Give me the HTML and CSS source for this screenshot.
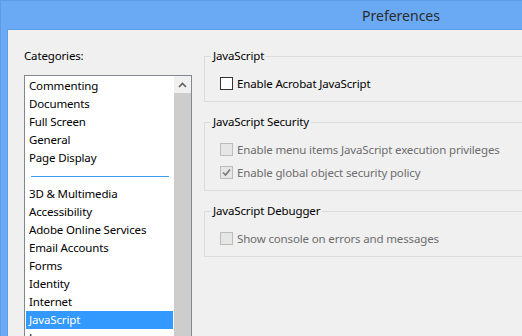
FILE: index.html
```html
<!DOCTYPE html>
<html>
<head>
<meta charset="utf-8">
<link rel="stylesheet" href="styles.css">
</head>
<body>
<div class="window">
  <div class="titlebar"><span class="title">Preferences</span></div>
  <div class="client">
    <div class="categories">
      <div class="cat-label">Categories:</div>
      <div class="listbox">
        <ul class="items">
          <li class="item">Commenting</li>
          <li class="item">Documents</li>
          <li class="item">Full Screen</li>
          <li class="item">General</li>
          <li class="item">Page Display</li>
          <li class="sep"></li>
          <li class="item">3D &amp; Multimedia</li>
          <li class="item">Accessibility</li>
          <li class="item">Adobe Online Services</li>
          <li class="item">Email Accounts</li>
          <li class="item">Forms</li>
          <li class="item">Identity</li>
          <li class="item">Internet</li>
          <li class="item selected">JavaScript</li>
          <li class="item">Languages</li>
        </ul>
        <div class="scrollbar">
          <div class="sb-up">
            <svg width="9" height="6" viewBox="0 0 9 6"><path d="M1 5 L4.5 1.5 L8 5" fill="none" stroke="#606060" stroke-width="1.6"/></svg>
          </div>
          <div class="sb-thumb"></div>
        </div>
      </div>
    </div>
    <div class="panel">
      <fieldset class="group">
        <legend class="legend">JavaScript</legend>
        <div class="row">
          <span class="box"></span>
          <span class="label">Enable Acrobat <u>J</u>avaScript</span>
        </div>
      </fieldset>
      <fieldset class="group">
        <legend class="legend">JavaScript Security</legend>
        <div class="row disabled">
          <span class="box"></span>
          <span class="label">Enable menu items JavaScript execution privileges</span>
        </div>
        <div class="row disabled">
          <span class="box"><svg width="11" height="11" viewBox="0 0 11 11"><path d="M2 5.5 L4.5 8 L9 2.5" fill="none" stroke="#7a7a7a" stroke-width="1.7"/></svg></span>
          <span class="label">Enable global object security policy</span>
        </div>
      </fieldset>
      <fieldset class="group">
        <legend class="legend">JavaScript Debugger</legend>
        <div class="row disabled">
          <span class="box"></span>
          <span class="label">Show console on errors and messages</span>
        </div>
      </fieldset>
    </div>
  </div>
</div>
</body>
</html>
```

FILE: styles.css
```css
html, body {
  margin: 0;
  padding: 0;
  overflow: hidden;
  height: 100%;
}
body {
  font-family: "Noto Sans", sans-serif;
  font-size: 11.5px;
  letter-spacing: -0.15px;
  color: #000;
  background: #6aaaf5;
}
.window {
  width: 800px;
  height: 600px;
  background: #6aaaf5;
  border: 1px solid #5b9be8;
  display: flex;
  flex-direction: column;
  padding: 0 0 0 6px;
}
.titlebar {
  height: 28px;
  display: flex;
  align-items: center;
  justify-content: center;
}
.title {
  font-size: 14px;
  letter-spacing: 0;
  color: #2b2b2b;
  margin-left: -12px;
}
.client {
  flex: 1;
  background: #f0f0f0;
  border-top: 1px solid #5d9ce6;
  border-left: 1px solid #5d9ce6;
  display: flex;
  gap: 12px;
  padding: 18px 0 0 16px;
}
.categories {
  width: 168px;
  display: flex;
  flex-direction: column;
}
.cat-label {
  height: 16px;
  line-height: 16px;
  margin-bottom: 11px;
}
.listbox {
  height: 300px;
  border: 1px solid #828790;
  background: #fff;
  display: flex;
}
.items {
  list-style: none;
  margin: 0;
  padding: 1px;
  flex: 1;
  overflow: hidden;
}
.item {
  height: 18px;
  line-height: 18px;
  padding-left: 3px;
  white-space: nowrap;
}
.item.selected {
  background: #3399ff;
  color: #fff;
}
.sep {
  height: 18px;
  display: flex;
  align-items: center;
  padding: 0 4px 0 5px;
}
.sep::before {
  content: "";
  flex: 1;
  height: 1px;
  background: #3c9cf0;
}
.scrollbar {
  width: 17px;
  display: flex;
  flex-direction: column;
}
.sb-up {
  height: 17px;
  background: #f0f0f0;
  display: flex;
  align-items: center;
  justify-content: center;
}
.sb-thumb {
  flex: 1;
  background: #cdcdcd;
}
.panel {
  flex: 1;
  display: flex;
  flex-direction: column;
}
.group {
  margin: 0 0 12px 0;
  border: 1px solid #dcdcdc;
  padding: 10px 0 9px 6px;
  display: flex;
  flex-direction: column;
  gap: 5px;
  min-width: 0;
}
.legend {
  padding: 0 2px;
  line-height: 16px;
  height: 16px;
}
.row {
  display: flex;
  align-items: center;
  height: 18px;
  gap: 4px;
  margin-left: 9px;
  white-space: nowrap;
}
.box {
  width: 11px;
  height: 11px;
  border: 1px solid #333;
  background: #fff;
  display: flex;
  align-items: center;
  justify-content: center;
}
.row.disabled .box {
  border-color: #bcbcbc;
  background: #e6e6e6;
}
.row.disabled .label {
  color: #6d6d6d;
}
```
